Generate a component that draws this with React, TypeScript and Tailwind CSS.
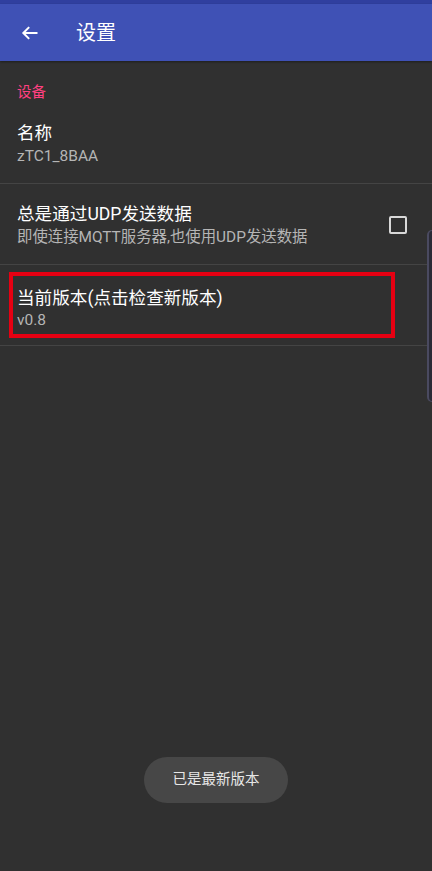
import React from "react";

export default function App() {
  const font = { fontFamily: 'Roboto, "Noto Sans CJK SC", sans-serif' };
  return (
    <div className="relative w-[432px] h-[871px] bg-[#303030] overflow-hidden" style={font}>
      <div className="h-[4px] bg-[#303f9f]" />
      <div className="h-[57px] bg-[#3f51b5] flex items-center shadow-[0_1px_2px_rgba(0,0,0,0.4)]">
        <div className="w-[60px] flex items-center pl-[20px]">
          <svg width="20" height="20" viewBox="0 0 24 24" fill="none" stroke="#ffffff" strokeWidth="2.4">
            <path d="M21 12H4M11 5l-7 7 7 7" />
          </svg>
        </div>
        <div className="ml-[16px] text-white text-[20px] leading-none">设置</div>
      </div>
      <div className="pt-[22px] px-[17px] text-[14.5px] leading-[20px] text-[#ff4081]">设备</div>
      <div className="px-[17px] pt-[18px] pb-[16px] border-b border-[#444444]">
        <div className="text-[17.6px] leading-[24px] text-white">名称</div>
        <div className="text-[15.5px] leading-[22px] text-[#b5b5b5]">zTC1_8BAA</div>
      </div>
      <div className="flex items-center px-[17px] pt-[18px] pb-[16px] border-b border-[#444444]">
        <div className="flex-1">
          <div className="text-[17.6px] leading-[24px] text-white">总是通过UDP发送数据</div>
          <div className="text-[15.4px] leading-[22px] text-[#b5b5b5]">即使连接MQTT服务器,也使用UDP发送数据</div>
        </div>
        <div className="w-[18px] h-[18px] border-2 border-[#d8d8d8] rounded-[2px] mr-[8px]" />
      </div>
      <div className="pt-[7px] pb-[7px] pl-[9px] border-b border-[#444444]">
        <div className="w-[386px] h-[66px] border-[4px] border-[#e60012] pl-[4px] pt-[10px]">
          <div className="text-[17.6px] leading-[24px] text-white">当前版本(点击检查新版本)</div>
          <div className="text-[15.5px] leading-[20px] text-[#b5b5b5]">v0.8</div>
        </div>
      </div>
      <div className="absolute right-0 top-[230px] w-[5px] h-[172px] rounded-l-[6px] bg-[#2a2a36] border-l-2 border-y border-[#4a4a60]" />
      <div className="absolute left-[144px] top-[757px] w-[144px] h-[46px] rounded-full bg-[#474747] flex items-center justify-center text-[14.5px] text-[#e6e6e6]">
        已是最新版本
      </div>
    </div>
  );
}
